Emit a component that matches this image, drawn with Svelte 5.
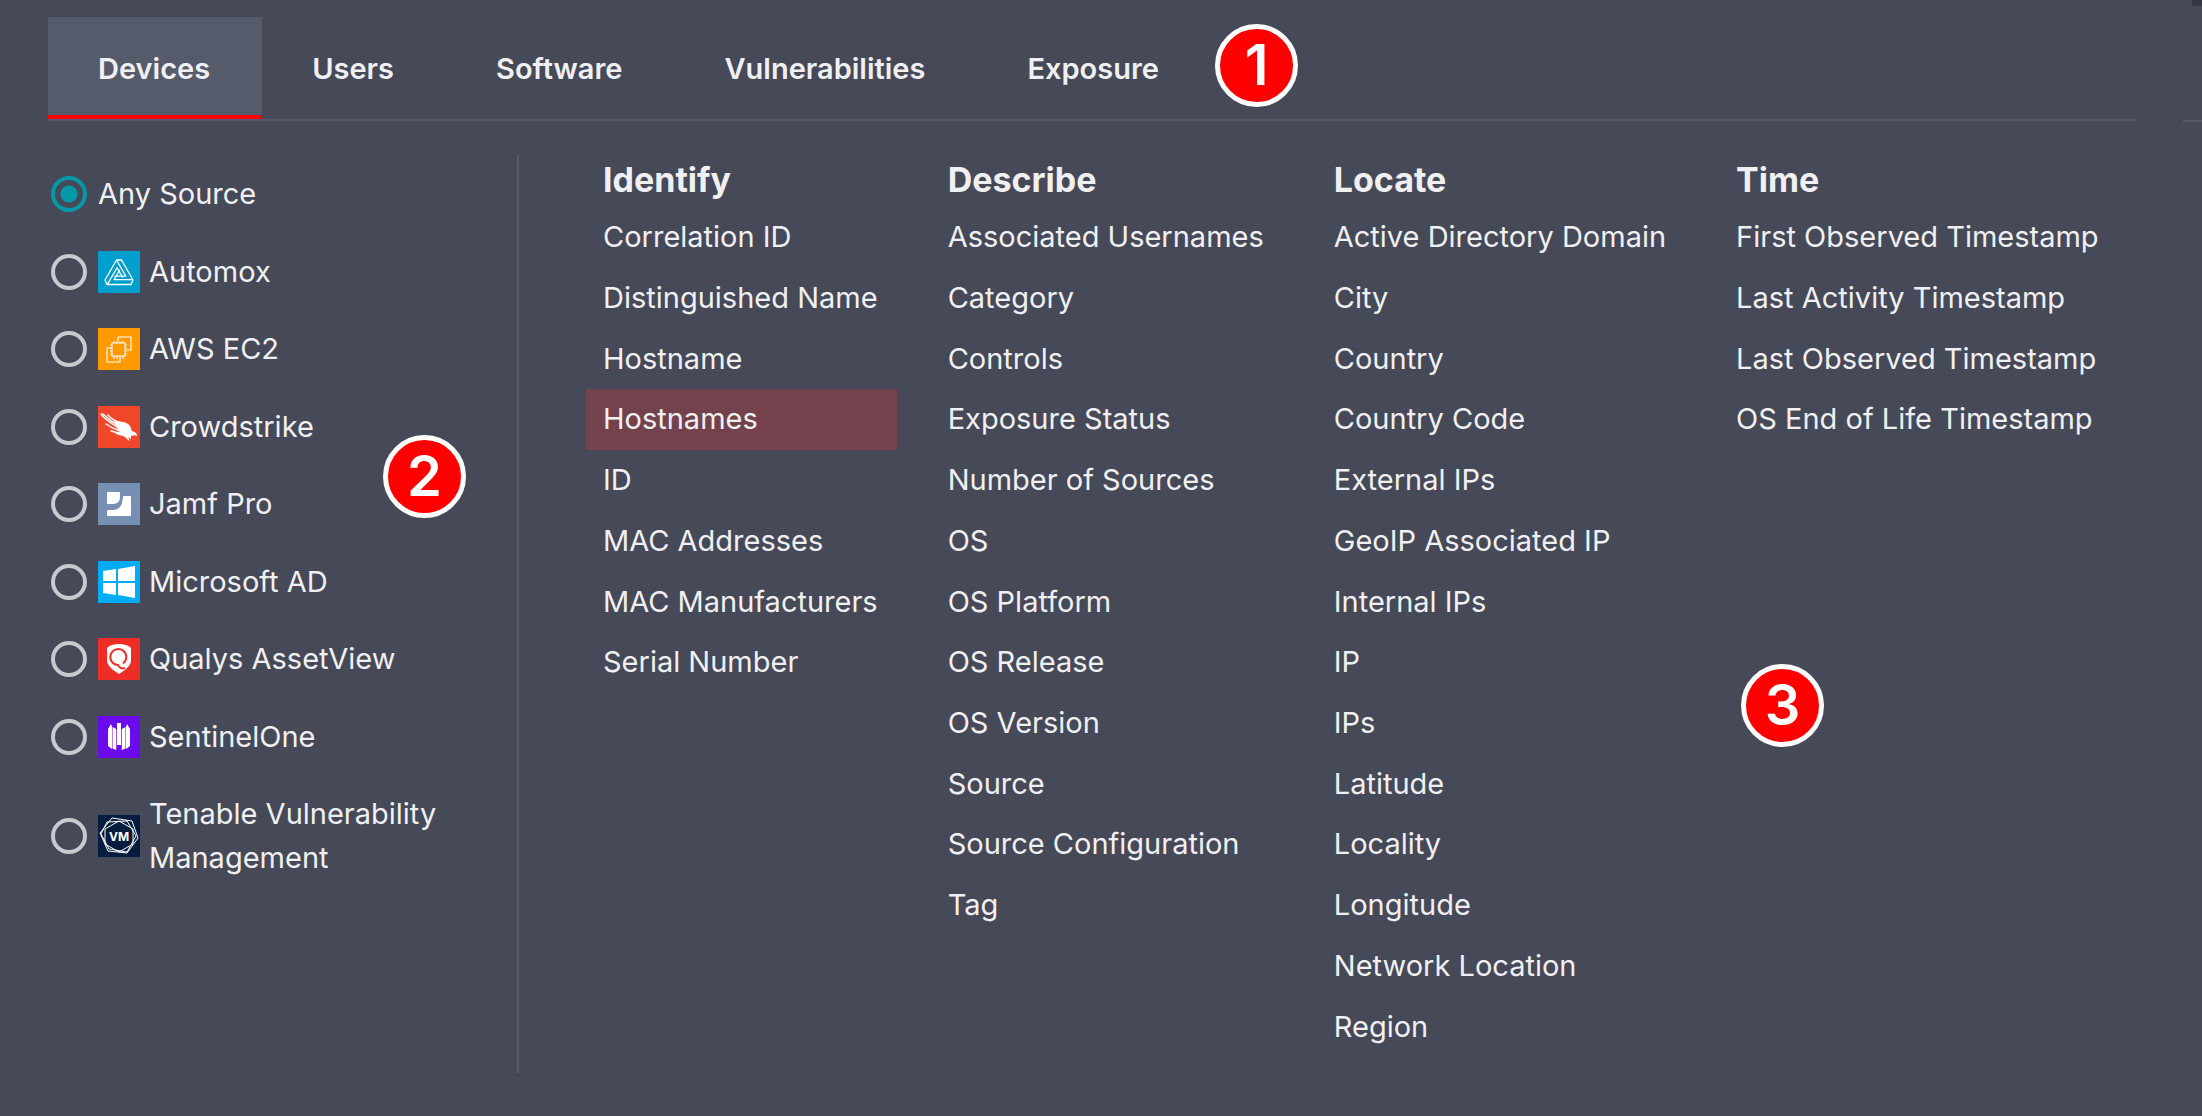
<script>
  let tabs = ['Devices', 'Users', 'Software', 'Vulnerabilities', 'Exposure'];
  let activeTab = $state('Devices');

  let sources = [
    { id: 'any', name: 'Any Source' },
    { id: 'automox', name: 'Automox', color: '#009fce' },
    { id: 'ec2', name: 'AWS EC2', color: '#ff9900' },
    { id: 'crowdstrike', name: 'Crowdstrike', color: '#f04629' },
    { id: 'jamf', name: 'Jamf Pro', color: '#778fb3' },
    { id: 'ad', name: 'Microsoft AD', color: '#00adf5' },
    { id: 'qualys', name: 'Qualys AssetView', color: '#ed2e26' },
    { id: 'sentinelone', name: 'SentinelOne', color: '#6b0aea' },
    { id: 'tenable', name: 'Tenable Vulnerability Management', color: '#071d40' }
  ];
  let source = $state('any');

  let groups = [
    {
      title: 'Identify',
      fields: ['Correlation ID', 'Distinguished Name', 'Hostname', 'Hostnames', 'ID', 'MAC Addresses', 'MAC Manufacturers', 'Serial Number']
    },
    {
      title: 'Describe',
      fields: ['Associated Usernames', 'Category', 'Controls', 'Exposure Status', 'Number of Sources', 'OS', 'OS Platform', 'OS Release', 'OS Version', 'Source', 'Source Configuration', 'Tag']
    },
    {
      title: 'Locate',
      fields: ['Active Directory Domain', 'City', 'Country', 'Country Code', 'External IPs', 'GeoIP Associated IP', 'Internal IPs', 'IP', 'IPs', 'Latitude', 'Locality', 'Longitude', 'Network Location', 'Region']
    },
    {
      title: 'Time',
      fields: ['First Observed Timestamp', 'Last Activity Timestamp', 'Last Observed Timestamp', 'OS End of Life Timestamp']
    }
  ];
  let field = $state('Hostnames');
</script>

<div class="picker">
  <div class="corner"></div>
  <div class="edge"></div>

  <nav class="tabs">
    {#each tabs as tab}
      <button class="tab" class:active={tab === activeTab} onclick={() => (activeTab = tab)}>{tab}</button>
    {/each}
    <span class="badge badge-tabs">1</span>
  </nav>

  <div class="body">
    <div class="sources">
      {#each sources as item}
        <label class="source">
          <input type="radio" name="source" value={item.id} bind:group={source} />
          {#if item.color}
            <svg class="logo" viewBox="0 0 42 42" style="background: {item.color}" aria-hidden="true">
              {#if item.id === 'automox'}
                <g fill="none" stroke="#fff" stroke-width="1.3" stroke-linejoin="round">
                  <path d="M18.5 9h5L35 29l-2 4.500H9L7 29z" />
                  <path d="M18.500 9l9.300 16.200H16.500" />
                  <path d="M18.500 9l9.300 16.200H16.500" transform="rotate(120 21 23.500)" />
                  <path d="M18.500 9l9.300 16.200H16.500" transform="rotate(240 21 23.500)" />
                </g>
              {:else if item.id === 'ec2'}
                <g fill="none" stroke="#fff" stroke-width="1.1">
                  <path d="M14 15h13v13H14z" />
                  <path d="M20 13V9h13v13h-4M13 20H9v14h13v-4" />
                  <path d="M16 13v2M19 13v2M22 13v2M25 13v2M16 28v3M19 28v3M22 28v3M25 28v3M12 17h2M12 20h2M12 23h2M12 26h2M27 17h2M27 20h2M27 23h2M27 26h2" />
                </g>
              {:else if item.id === 'crowdstrike'}
                <path fill="#fff" d="M16 14c5 2 10 1 14 4 3 2 3 5 4 7 2 1 5 1 5 5-2-1-4-1-6 0v3l-3-2 2 4c-3-1-4-4-7-5-5-1-7-2-9-4 2 0 4 1 6 0-3-3-5-7-6-12z" />
                <path fill="none" stroke="#fff" stroke-width="1.400" stroke-linecap="round" d="M3 8c4 6 10 9 18 14M5 8c4 4 9 8 15 11M10 9c3 4 7 6 12 8M8 18c4 3 8 5 14 7M13 25c3 1 6 2 11 2" />
              {:else if item.id === 'jamf'}
                <g fill="#fff">
                  <path d="M10 9h11q1 0 1 1v4q0 7-7 7h-5q-1 0-1-1V10q0-1 1-1z" />
                  <path d="M26 13h6q1 0 1 1v18q0 1-1 1H10q-1 0-1-1v-4q0-1 1-1h5q7 0 9-7l1-6q0-1 1-1z" />
                </g>
              {:else if item.id === 'ad'}
                <path fill="#fff" d="M5 10l13-2v12H5zM20 8l17-3v15H20zM5 22h13v12L5 32zM20 22h17v15l-17-3z" />
              {:else if item.id === 'qualys'}
                <path fill="#fff" d="M21 6c5 0 9 1 12 4v12c0 6-6 10-12 14C15 32 9 28 9 22V10c3-3 7-4 12-4z" />
                <path fill="none" stroke="#ed2e26" stroke-width="2" d="M25 25.500a8 8 0 1 0-5 1.500c1 3 4 4 7 3" />
              {:else if item.id === 'sentinelone'}
                <path fill="#fff" d="M19 7h4v22h-4zM14.500 11l3.800 2v21l-3.800-1.500zM27.500 11l-3.800 2v21l3.800-1.500zM13 8l1 3v22l-4-3V13zM29 8l-1 3v22l4-3V13z" />
              {:else}
                <g fill="none" stroke="#fff" stroke-width="1">
                  <path d="M14 3l20 3 6 17-11 15-19-2-8-18z" />
                  <path d="M21 6l14 8v15l-14 8-14-8V14z" />
                  <path d="M9 7l20-1 9 15-9 16-18-3-8-15z" />
                </g>
                <text x="21" y="26" text-anchor="middle" font-size="12" font-weight="700" fill="#fff">VM</text>
              {/if}
            </svg>
          {/if}
          <span>{item.name}</span>
        </label>
      {/each}
      <span class="badge badge-sources">2</span>
    </div>

    <div class="groups">
      {#each groups as group}
        <section class="group">
          <h2>{group.title}</h2>
          <div class="fields">
            {#each group.fields as name}
              <button class="field" class:selected={name === field} onclick={() => (field = name)}>{name}</button>
            {/each}
          </div>
        </section>
      {/each}
      <span class="badge badge-fields">3</span>
    </div>
  </div>
</div>

<style>
  :global(body) {
    background: #464957;
  }

  .picker {
    position: relative;
    display: flex;
    flex-direction: column;
    box-sizing: border-box;
    min-height: 100vh;
    padding: 17px 66px 43px 48px;
    font-family: Inter, 'Noto Sans', sans-serif;
    font-size: 29px;
    line-height: 44px;
    color: #f0f0f2;
  }

  button {
    border: 0;
    background: none;
    color: inherit;
    font: inherit;
    cursor: pointer;
  }

  /* slivers of the neighbouring panel */
  .corner {
    position: absolute;
    top: 0;
    right: 0;
    width: 10px;
    height: 6px;
    background: #343642;
  }

  .edge {
    position: absolute;
    top: 120px;
    right: 0;
    width: 19px;
    height: 2px;
    background: #555868;
  }

  .tabs {
    position: relative;
    display: flex;
    border-bottom: 2px solid #565a6b;
  }

  .tab {
    height: 102px;
    padding: 5px 52px 0 50px;
    border-bottom: 4px solid transparent;
    font-weight: 600;
  }

  .tab.active {
    background: #565b6b;
    border-bottom-color: #ff0000;
  }

  .body {
    display: flex;
    flex: 1;
    margin-top: 34px;
  }

  .sources {
    position: relative;
    display: flex;
    flex-direction: column;
    justify-content: space-between;
    box-sizing: border-box;
    width: 471px;
    padding: 17px 64px 193px 3px;
    border-right: 2px solid #565a6b;
  }

  .source {
    display: flex;
    align-items: center;
    cursor: pointer;
  }

  .source input {
    appearance: none;
    flex: none;
    width: 36px;
    height: 36px;
    margin: 0 11px 0 0;
    border: 4px solid #c9cacf;
    border-radius: 50%;
  }

  .source input:checked {
    border-color: #0598a8;
    background: radial-gradient(circle, #0598a8 8px, transparent 9px);
  }

  .logo {
    flex: none;
    width: 42px;
    height: 42px;
    margin-right: 9px;
  }

  .groups {
    position: relative;
    display: flex;
    flex: 1;
    gap: 34px;
    padding-left: 67px;
    white-space: nowrap;
  }

  .group {
    display: flex;
    flex-direction: column;
    padding-bottom: 16px;
  }

  h2 {
    margin: 0;
    padding: 3px 17px 5px;
    font-size: 34px;
    font-weight: 700;
    line-height: 44px;
  }

  .fields {
    display: grid;
    flex: 1;
    grid-template-rows: repeat(14, 1fr);
  }

  .field {
    padding: 0 19px 0 17px;
    text-align: left;
  }

  .field.selected {
    background: #74424c;
  }

  /* numbered callouts sit over the panel */
  .badge {
    position: absolute;
    box-sizing: border-box;
    width: 83px;
    height: 83px;
    border: 5px solid #fff;
    border-radius: 50%;
    background: #ff0000;
    color: #fff;
    font-size: 56px;
    font-weight: 600;
    line-height: 73px;
    text-align: center;
  }

  .badge-tabs {
    top: 7px;
    left: 1167px;
  }

  .badge-sources {
    top: 280px;
    right: 51px;
  }

  .badge-fields {
    top: 509px;
    left: 1222px;
  }
</style>
